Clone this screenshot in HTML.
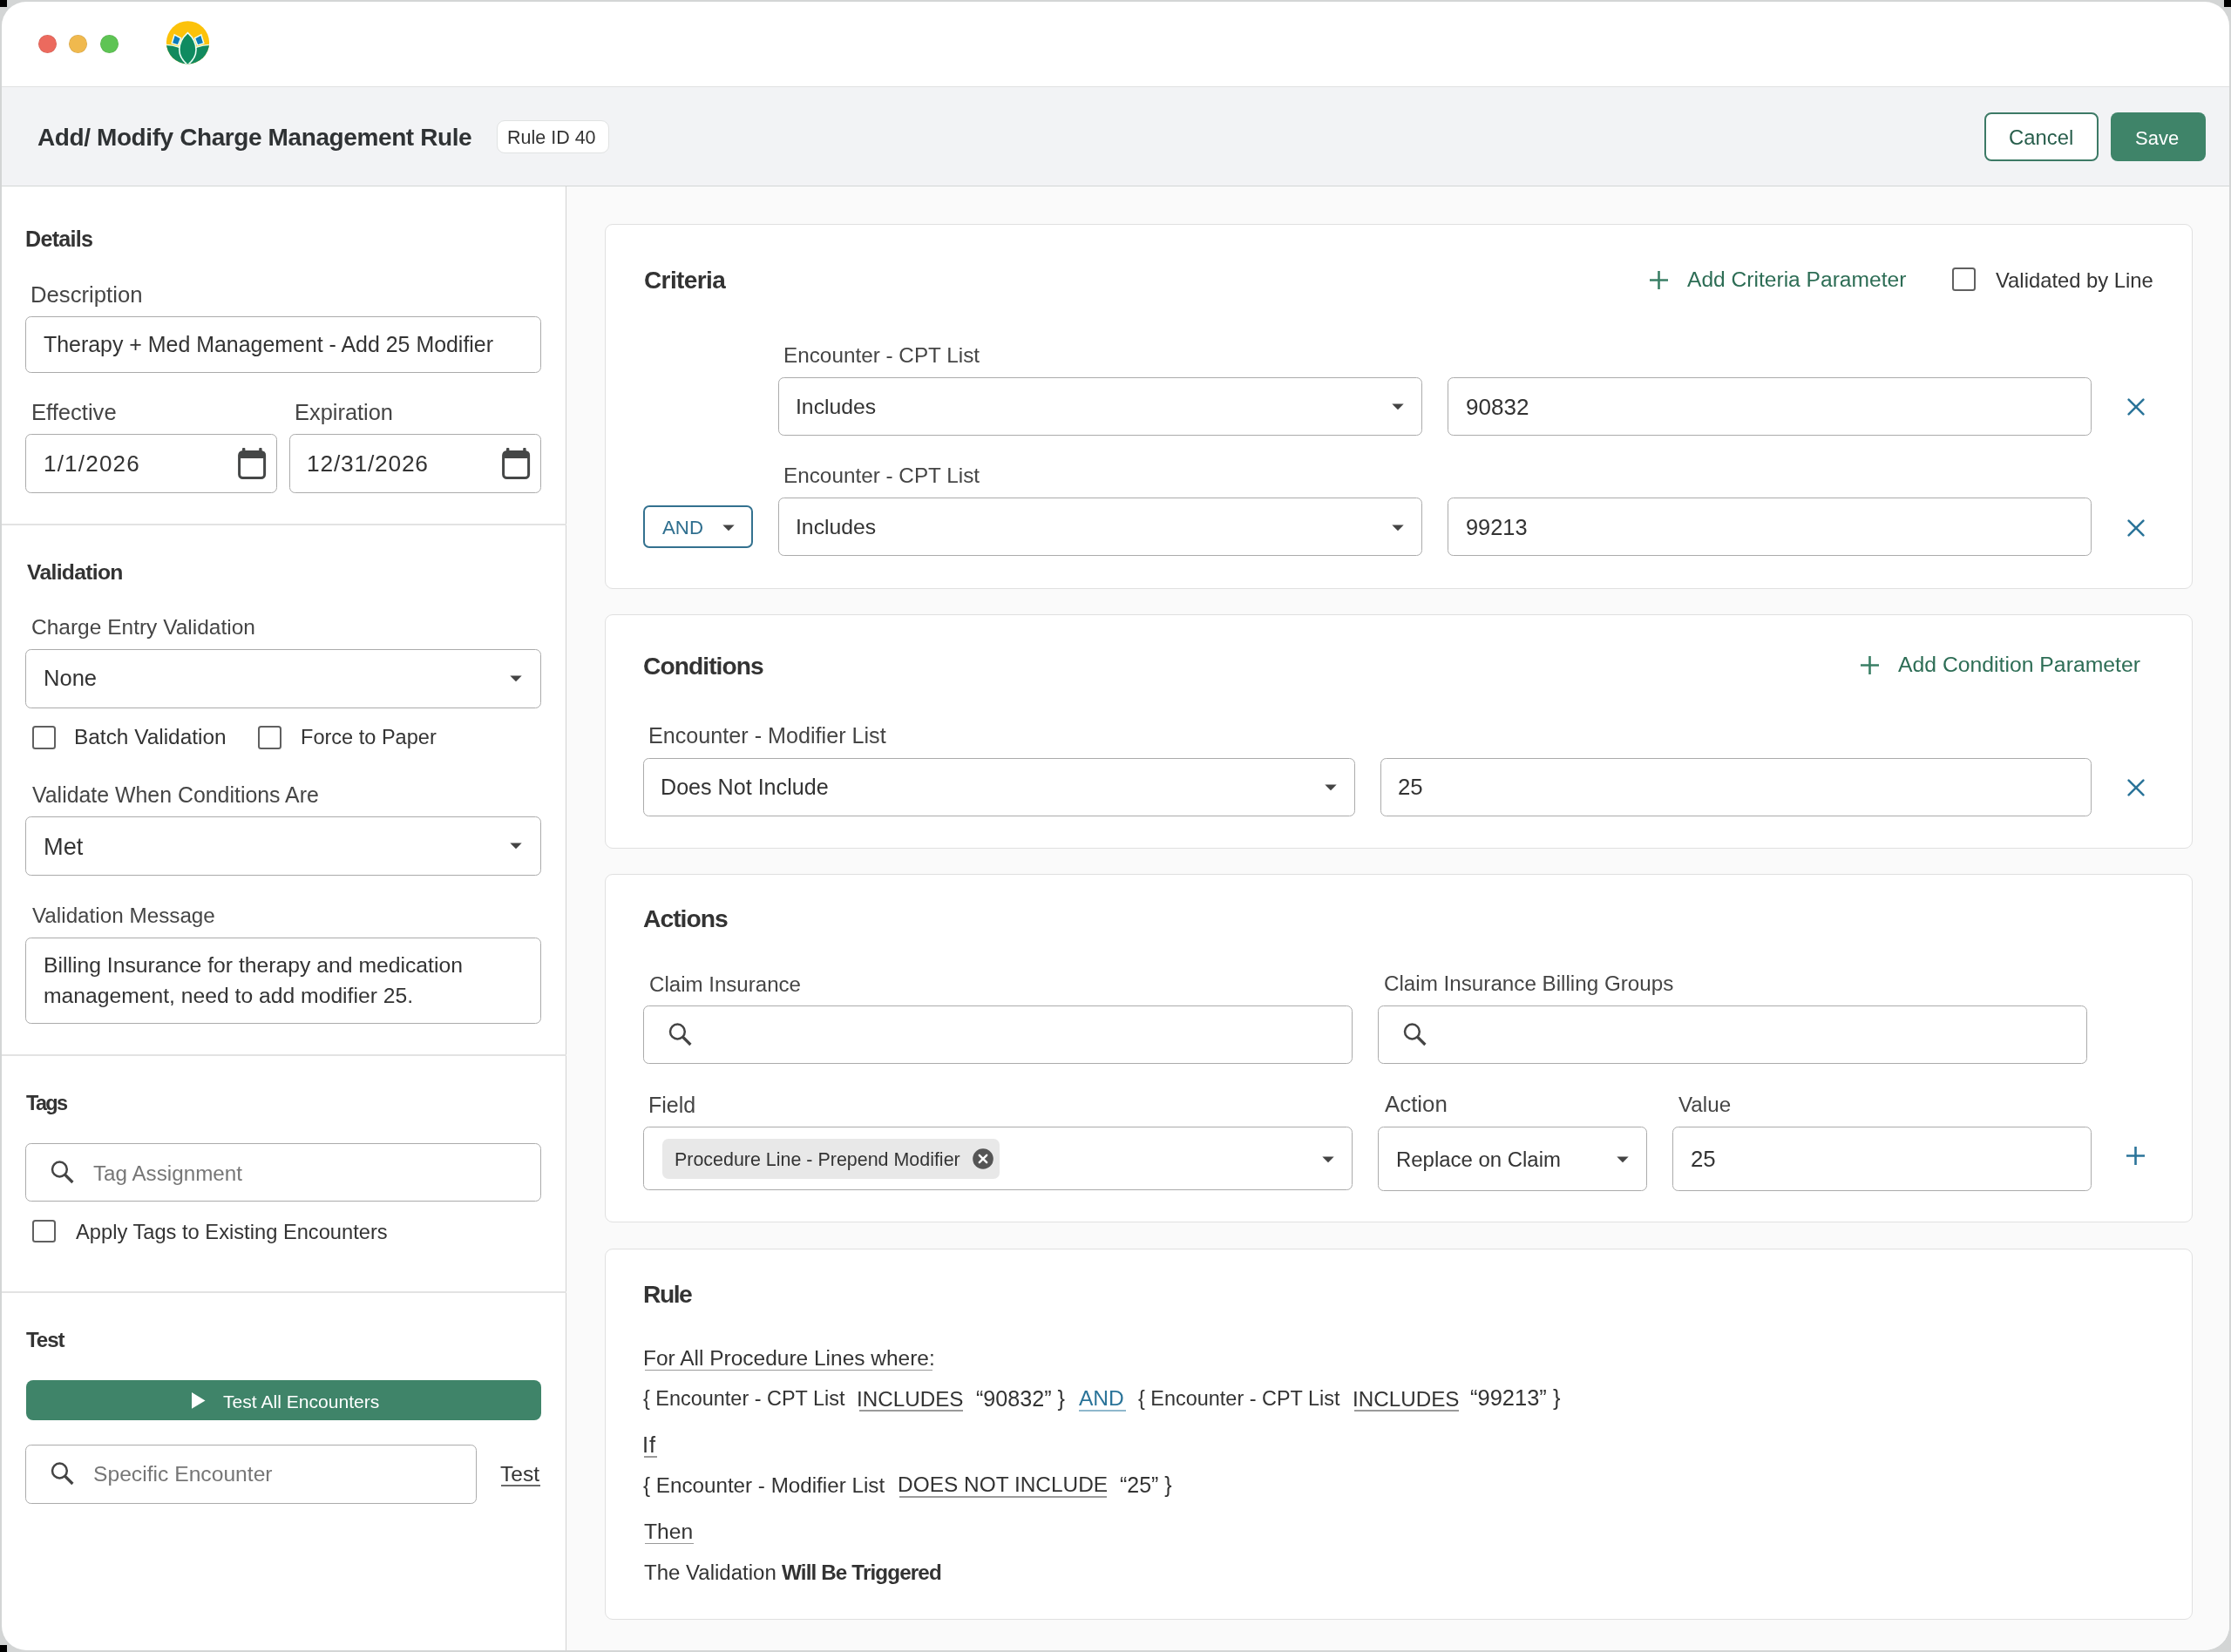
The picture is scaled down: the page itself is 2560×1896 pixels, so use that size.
<!DOCTYPE html><html><head><meta charset="utf-8"><style>
html,body{margin:0;padding:0;}
body{width:2560px;height:1896px;background:#D3D5D5;position:relative;overflow:hidden;font-family:"Liberation Sans",sans-serif;color:#333;}
.t{position:absolute;white-space:pre;line-height:1;will-change:transform;}
.b{position:absolute;box-sizing:border-box;}
#win{position:absolute;left:2px;top:2px;width:2556px;height:1892px;border-radius:28px;background:#fff;overflow:hidden;}
#win .t, #win .b, #win svg{}
u{text-decoration:none;}
</style></head><body>
<div class="b" style="left:0;top:0;width:8px;height:8px;background:#000"></div>
<div class="b" style="left:2552px;top:0;width:8px;height:8px;background:#000"></div>
<div class="b" style="left:0;top:1888px;width:8px;height:8px;background:#000"></div>
<div id="win">
<div style="position:absolute;left:-2px;top:-2px;width:2560px;height:1896px;">
<div class="b" style="left:0.0px;top:98.5px;width:2560.0px;height:115.3px;background:#F2F3F5;border-top:1.5px solid #E0E2E2;border-bottom:1.5px solid #D3D6D6;"></div>
<div class="b" style="left:649.3px;top:213.8px;width:1910.7px;height:1682.2px;background:#FAFAFA;border-left:1.5px solid #D2D2D2;"></div>
<div class="b" style="left:43.7px;top:39.9px;width:21.2px;height:21.0px;border-radius:50%;background:#EC6A5E;box-shadow:inset 0 0 0 0.6px rgba(0,0,0,0.12);"></div>
<div class="b" style="left:79.2px;top:39.9px;width:21.2px;height:21.0px;border-radius:50%;background:#F0B94E;box-shadow:inset 0 0 0 0.6px rgba(0,0,0,0.12);"></div>
<div class="b" style="left:114.7px;top:39.9px;width:21.2px;height:21.0px;border-radius:50%;background:#5EC454;box-shadow:inset 0 0 0 0.6px rgba(0,0,0,0.12);"></div>
<svg style="position:absolute;left:185.0px;top:18.0px" width="60" height="60" viewBox="0 0 60 60"><defs><clipPath id="lc"><circle cx="30.5" cy="30.8" r="24.6"/></clipPath></defs>
<g clip-path="url(#lc)">
<rect x="0" y="0" width="60" height="60" fill="#FCC20A"/>
<path d="M1 33.4 Q12 33 20 36.2 L30.4 38 L30.4 60 L1 60 Z" fill="#128A5E" stroke="#ECFFF6" stroke-width="1.4"/>
<path d="M60 33.4 Q49 33 40.8 36.2 L30.4 38 L30.4 60 L60 60 Z" fill="#128A5E" stroke="#ECFFF6" stroke-width="1.4"/>
<path d="M15.2 21.8 L22.6 25.8 L19.4 33.9 L12.2 31.6 Z" fill="#0E7CB9" stroke="#ECFFF6" stroke-width="1.5"/>
<path d="M45.8 21.8 L38.4 25.8 L41.6 33.9 L48.8 31.6 Z" fill="#0E7CB9" stroke="#ECFFF6" stroke-width="1.5"/>
<path d="M30.4 19.6 C36.5 25 40 32 40 39 C40 46 36 52 30.4 56.5 C24.8 52 20.8 46 20.8 39 C20.8 32 24.3 25 30.4 19.6 Z" fill="#0F8B60" stroke="#ECFFF6" stroke-width="1.6"/>
</g></svg>
<div class="t" style="left:43.30px;top:144.3px;font-size:28.0px;font-weight:700;color:#2F3234;letter-spacing:-0.4px;">Add/ Modify Charge Management Rule</div>
<div class="b" style="left:569.8px;top:138.3px;width:129.0px;height:38.2px;background:#fff;border:1.5px solid #E0E2E2;border-radius:9px;"></div>
<div class="t" style="left:582.24px;top:148.1px;font-size:21.51px;">Rule ID 40</div>
<div class="b" style="left:2277.0px;top:129.0px;width:131.0px;height:56.0px;background:#fff;border:2px solid #3D7A66;border-radius:8px;"></div>
<div class="t" style="left:2304.59px;top:145.9px;font-size:23.834px;color:#285E4C;">Cancel</div>
<div class="b" style="left:2422.0px;top:129.0px;width:109.0px;height:56.0px;background:#3F8469;border-radius:8px;"></div>
<div class="t" style="left:2450.40px;top:147.5px;font-size:22.0px;color:#fff;">Save</div>
<div class="t" style="left:29.32px;top:261.7px;font-size:25.171px;font-weight:700;color:#333333;letter-spacing:-0.75px;">Details</div>
<div class="t" style="left:35.49px;top:326.2px;font-size:25.698px;color:#454545;">Description</div>
<div class="b" style="left:29.2px;top:363.2px;width:591.5px;height:64.5px;border:1.5px solid #ABABAB;border-radius:6.5px;background:#fff;"></div>
<div class="t" style="left:50.44px;top:383.3px;font-size:24.939px;color:#333333;">Therapy + Med Management - Add 25 Modifier</div>
<div class="t" style="left:35.50px;top:461.1px;font-size:25.596px;color:#454545;">Effective</div>
<div class="t" style="left:338.12px;top:461.3px;font-size:25.413px;color:#454545;">Expiration</div>
<div class="b" style="left:29.2px;top:498.2px;width:288.5px;height:67.5px;border:1.5px solid #ABABAB;border-radius:6.5px;background:#fff;"></div>
<div class="b" style="left:332.2px;top:498.2px;width:288.5px;height:67.5px;border:1.5px solid #ABABAB;border-radius:6.5px;background:#fff;"></div>
<div class="t" style="left:49.82px;top:518.9px;font-size:26.059px;color:#333333;letter-spacing:1.2px;">1/1/2026</div>
<div class="t" style="left:352.39px;top:518.7px;font-size:26.332px;color:#333333;letter-spacing:0.8px;">12/31/2026</div>
<svg style="position:absolute;left:272.5px;top:512.5px" width="34" height="38" viewBox="0 0 34 38"><rect x="1.6" y="5.6" width="29" height="30" rx="4" fill="none" stroke="#454747" stroke-width="3"/><rect x="1" y="5" width="30.5" height="8" rx="3" fill="#454747"/><rect x="5" y="1" width="3.4" height="6" rx="1" fill="#454747"/><rect x="24.2" y="1" width="3.4" height="6" rx="1" fill="#454747"/></svg>
<svg style="position:absolute;left:575.5px;top:512.5px" width="34" height="38" viewBox="0 0 34 38"><rect x="1.6" y="5.6" width="29" height="30" rx="4" fill="none" stroke="#454747" stroke-width="3"/><rect x="1" y="5" width="30.5" height="8" rx="3" fill="#454747"/><rect x="5" y="1" width="3.4" height="6" rx="1" fill="#454747"/><rect x="24.2" y="1" width="3.4" height="6" rx="1" fill="#454747"/></svg>
<div class="b" style="left:2.0px;top:601.3px;width:648.0px;height:1.5px;background:#E3E3E3;"></div>
<div class="t" style="left:30.83px;top:644.8px;font-size:24.682px;font-weight:700;color:#333333;letter-spacing:-0.68px;">Validation</div>
<div class="t" style="left:36.36px;top:708.2px;font-size:24.512px;color:#454545;">Charge Entry Validation</div>
<div class="b" style="left:29.2px;top:745.2px;width:591.5px;height:67.5px;border:1.5px solid #ABABAB;border-radius:6.5px;background:#fff;"></div>
<div class="t" style="left:49.70px;top:766.4px;font-size:25.567px;color:#333333;">None</div>
<svg style="position:absolute;left:584.0px;top:774.0px" width="16" height="10" viewBox="0 0 16 10"><path d="M1.3 1.6 L14.7 1.6 L8 8.3 Z" fill="#444"/></svg>
<div class="b" style="left:37.2px;top:833.2px;width:26.6px;height:26.8px;border:2.7px solid #606060;border-radius:3.5px;background:#fff;"></div>
<div class="t" style="left:85.00px;top:834.3px;font-size:24.415px;color:#333333;">Batch Validation</div>
<div class="b" style="left:296.3px;top:833.2px;width:26.6px;height:26.8px;border:2.7px solid #606060;border-radius:3.5px;background:#fff;"></div>
<div class="t" style="left:344.77px;top:835.1px;font-size:23.561px;color:#333333;">Force to Paper</div>
<div class="t" style="left:37.49px;top:900.3px;font-size:24.907px;color:#454545;">Validate When Conditions Are</div>
<div class="b" style="left:29.2px;top:937.2px;width:591.5px;height:67.5px;border:1.5px solid #ABABAB;border-radius:6.5px;background:#fff;"></div>
<div class="t" style="left:49.57px;top:957.6px;font-size:27.222px;color:#333333;">Met</div>
<svg style="position:absolute;left:584.0px;top:966.0px" width="16" height="10" viewBox="0 0 16 10"><path d="M1.3 1.6 L14.7 1.6 L8 8.3 Z" fill="#444"/></svg>
<div class="t" style="left:37.49px;top:1039.1px;font-size:24.263px;color:#454545;">Validation Message</div>
<div class="b" style="left:29.2px;top:1076.0px;width:591.5px;height:99.2px;border:1.5px solid #ABABAB;border-radius:6.5px;background:#fff;"></div>
<div class="t" style="left:49.77px;top:1095.8px;font-size:24.738px;color:#333333;">Billing Insurance for therapy and medication</div>
<div class="t" style="left:50.16px;top:1130.7px;font-size:24.694px;color:#333333;">management, need to add modifier 25.</div>
<div class="b" style="left:2.0px;top:1210.3px;width:648.0px;height:1.5px;background:#E3E3E3;"></div>
<div class="t" style="left:30.24px;top:1254.8px;font-size:23.5px;font-weight:700;color:#333333;letter-spacing:-1.7px;">Tags</div>
<div class="b" style="left:29.2px;top:1312.2px;width:591.5px;height:67.3px;border:1.5px solid #ABABAB;border-radius:6.5px;background:#fff;"></div>
<svg style="position:absolute;left:58.0px;top:1332.0px" width="28" height="28" viewBox="0 0 28 28"><circle cx="10.4" cy="10" r="8.4" fill="none" stroke="#444" stroke-width="2.5"/><path d="M16.4 16 L25.4 25" stroke="#444" stroke-width="3.2"/></svg>
<div class="t" style="left:107.46px;top:1334.5px;font-size:24.229px;color:#767676;">Tag Assignment</div>
<div class="b" style="left:37.2px;top:1399.5px;width:26.6px;height:26.8px;border:2.7px solid #606060;border-radius:3.5px;background:#fff;"></div>
<div class="t" style="left:86.95px;top:1402.5px;font-size:23.693px;color:#333333;">Apply Tags to Existing Encounters</div>
<div class="b" style="left:2.0px;top:1482.3px;width:648.0px;height:1.5px;background:#E3E3E3;"></div>
<div class="t" style="left:30.23px;top:1526.2px;font-size:24.119px;font-weight:700;color:#333333;letter-spacing:-1.1px;">Test</div>
<div class="b" style="left:29.6px;top:1584.0px;width:591.1px;height:46.0px;background:#3F8469;border-radius:8px;"></div>
<svg style="position:absolute;left:219.0px;top:1597.0px" width="18" height="21" viewBox="0 0 18 21"><path d="M1 1 L16.5 10.4 L1 19.8 Z" fill="#fff"/></svg>
<div class="t" style="left:256.03px;top:1598.1px;font-size:21.1px;color:#fff;">Test All Encounters</div>
<div class="b" style="left:29.2px;top:1658.2px;width:517.5px;height:68.1px;border:1.5px solid #ABABAB;border-radius:6.5px;background:#fff;"></div>
<svg style="position:absolute;left:58.0px;top:1678.0px" width="28" height="28" viewBox="0 0 28 28"><circle cx="10.4" cy="10" r="8.4" fill="none" stroke="#444" stroke-width="2.5"/><path d="M16.4 16 L25.4 25" stroke="#444" stroke-width="3.2"/></svg>
<div class="t" style="left:106.88px;top:1679.5px;font-size:24.677px;color:#767676;">Specific Encounter</div>
<div class="t" style="left:574.45px;top:1680.3px;font-size:24.5px;color:#333333;">Test</div>
<div class="b" style="left:575.0px;top:1704.2px;width:45.0px;height:1.6px;background:#6a6a6a;"></div>
<div class="b" style="left:694.0px;top:256.6px;width:1822.0px;height:419.3px;background:#fff;border:1.5px solid #E0E0E0;border-radius:9px;"></div>
<div class="t" style="left:738.85px;top:307.9px;font-size:28.0px;font-weight:700;color:#333333;letter-spacing:-0.62px;">Criteria</div>
<svg style="position:absolute;left:1890.8px;top:308.7px" width="25" height="25" viewBox="0 0 25 25"><path d="M12.5 2 V23 M2 12.5 H23" stroke="#3A7F65" stroke-width="2.6"/></svg>
<div class="t" style="left:1935.55px;top:309.2px;font-size:24.598px;color:#2D6D55;">Add Criteria Parameter</div>
<div class="b" style="left:2240.0px;top:307.1px;width:26.6px;height:26.8px;border:2.7px solid #606060;border-radius:3.5px;background:#fff;"></div>
<div class="t" style="left:2289.60px;top:309.8px;font-size:23.819px;color:#333333;">Validated by Line</div>
<div class="t" style="left:899.01px;top:395.8px;font-size:24.306px;color:#454545;">Encounter - CPT List</div>
<div class="b" style="left:892.5px;top:432.9px;width:739.9px;height:67.1px;border:1.5px solid #ABABAB;border-radius:6.5px;background:#fff;"></div>
<div class="t" style="left:912.52px;top:454.5px;font-size:24.743px;color:#333333;">Includes</div>
<svg style="position:absolute;left:1596.3px;top:462.2px" width="16" height="10" viewBox="0 0 16 10"><path d="M1.3 1.6 L14.7 1.6 L8 8.3 Z" fill="#444"/></svg>
<div class="b" style="left:1661.2px;top:432.9px;width:739.0px;height:67.1px;border:1.5px solid #ABABAB;border-radius:6.5px;background:#fff;"></div>
<div class="t" style="left:1681.78px;top:453.5px;font-size:26.075px;color:#333333;">90832</div>
<svg style="position:absolute;left:2439.0px;top:455.0px" width="24" height="24" viewBox="0 0 24 24"><path d="M3.6 3.6 L20.4 20.4 M20.4 3.6 L3.6 20.4" stroke="#2B7499" stroke-width="2.6" stroke-linecap="round"/></svg>
<div class="t" style="left:899.01px;top:534.1px;font-size:24.306px;color:#454545;">Encounter - CPT List</div>
<div class="b" style="left:892.5px;top:571.2px;width:739.9px;height:67.3px;border:1.5px solid #ABABAB;border-radius:6.5px;background:#fff;"></div>
<div class="t" style="left:912.52px;top:592.9px;font-size:24.743px;color:#333333;">Includes</div>
<svg style="position:absolute;left:1596.3px;top:600.7px" width="16" height="10" viewBox="0 0 16 10"><path d="M1.3 1.6 L14.7 1.6 L8 8.3 Z" fill="#444"/></svg>
<div class="b" style="left:1661.2px;top:571.2px;width:739.0px;height:67.3px;border:1.5px solid #ABABAB;border-radius:6.5px;background:#fff;"></div>
<div class="t" style="left:1681.81px;top:592.5px;font-size:25.4px;color:#333333;">99213</div>
<svg style="position:absolute;left:2439.0px;top:593.5px" width="24" height="24" viewBox="0 0 24 24"><path d="M3.6 3.6 L20.4 20.4 M20.4 3.6 L3.6 20.4" stroke="#2B7499" stroke-width="2.6" stroke-linecap="round"/></svg>
<div class="b" style="left:738.0px;top:580.2px;width:126.0px;height:49.3px;background:#fff;border:2px solid #33718F;border-radius:7px;"></div>
<div class="t" style="left:759.96px;top:594.8px;font-size:22.284px;color:#2F6F8F;">AND</div>
<svg style="position:absolute;left:827.5px;top:601.0px" width="16" height="10" viewBox="0 0 16 10"><path d="M1.3 1.6 L14.7 1.6 L8 8.3 Z" fill="#444"/></svg>
<div class="b" style="left:694.0px;top:704.6px;width:1822.0px;height:269.0px;background:#fff;border:1.5px solid #E0E0E0;border-radius:9px;"></div>
<div class="t" style="left:737.84px;top:749.6px;font-size:28.206px;font-weight:700;color:#333333;letter-spacing:-0.94px;">Conditions</div>
<svg style="position:absolute;left:2133.0px;top:751.3px" width="25" height="25" viewBox="0 0 25 25"><path d="M12.5 2 V23 M2 12.5 H23" stroke="#3A7F65" stroke-width="2.6"/></svg>
<div class="t" style="left:2177.65px;top:750.9px;font-size:24.762px;color:#2D6D55;">Add Condition Parameter</div>
<div class="t" style="left:743.94px;top:832.3px;font-size:25.17px;color:#454545;">Encounter - Modifier List</div>
<div class="b" style="left:738.2px;top:869.8px;width:816.9px;height:66.8px;border:1.5px solid #ABABAB;border-radius:6.5px;background:#fff;"></div>
<div class="t" style="left:757.94px;top:891.3px;font-size:25.112px;color:#333333;">Does Not Include</div>
<svg style="position:absolute;left:1519.0px;top:899.0px" width="16" height="10" viewBox="0 0 16 10"><path d="M1.3 1.6 L14.7 1.6 L8 8.3 Z" fill="#444"/></svg>
<div class="b" style="left:1584.0px;top:869.8px;width:816.3px;height:67.4px;border:1.5px solid #ABABAB;border-radius:6.5px;background:#fff;"></div>
<div class="t" style="left:1604.40px;top:891.1px;font-size:25.847px;color:#333333;">25</div>
<svg style="position:absolute;left:2438.6px;top:892.0px" width="24" height="24" viewBox="0 0 24 24"><path d="M3.6 3.6 L20.4 20.4 M20.4 3.6 L3.6 20.4" stroke="#2B7499" stroke-width="2.6" stroke-linecap="round"/></svg>
<div class="b" style="left:694.0px;top:1003.3px;width:1822.0px;height:400.0px;background:#fff;border:1.5px solid #E0E0E0;border-radius:9px;"></div>
<div class="t" style="left:738.29px;top:1040.3px;font-size:28.328px;font-weight:700;color:#333333;letter-spacing:-1.0px;">Actions</div>
<div class="t" style="left:744.78px;top:1117.6px;font-size:24.08px;color:#454545;">Claim Insurance</div>
<div class="b" style="left:738.2px;top:1154.2px;width:814.0px;height:66.7px;border:1.5px solid #ABABAB;border-radius:6.5px;background:#fff;"></div>
<svg style="position:absolute;left:767.0px;top:1174.0px" width="28" height="28" viewBox="0 0 28 28"><circle cx="10.4" cy="10" r="8.4" fill="none" stroke="#444" stroke-width="2.5"/><path d="M16.4 16 L25.4 25" stroke="#444" stroke-width="3.2"/></svg>
<div class="t" style="left:1587.77px;top:1117.3px;font-size:24.21px;color:#454545;">Claim Insurance Billing Groups</div>
<div class="b" style="left:1580.8px;top:1154.0px;width:814.6px;height:67.4px;border:1.5px solid #ABABAB;border-radius:6.5px;background:#fff;"></div>
<svg style="position:absolute;left:1609.5px;top:1174.0px" width="28" height="28" viewBox="0 0 28 28"><circle cx="10.4" cy="10" r="8.4" fill="none" stroke="#444" stroke-width="2.5"/><path d="M16.4 16 L25.4 25" stroke="#444" stroke-width="3.2"/></svg>
<div class="t" style="left:743.95px;top:1255.8px;font-size:25.01px;color:#454545;">Field</div>
<div class="b" style="left:738.2px;top:1293.2px;width:813.5px;height:73.1px;border:1.5px solid #ABABAB;border-radius:6.5px;background:#fff;"></div>
<div class="b" style="left:760.0px;top:1307.4px;width:386.5px;height:45.6px;background:#E8E8E8;border-radius:7px;"></div>
<div class="t" style="left:774.24px;top:1320.8px;font-size:21.445px;color:#333333;">Procedure Line - Prepend Modifier</div>
<svg style="position:absolute;left:1115.5px;top:1318.0px" width="24" height="24" viewBox="0 0 24 24"><circle cx="12" cy="12" r="11.8" fill="#555"/><path d="M7.8 7.8 L16.2 16.2 M16.2 7.8 L7.8 16.2" stroke="#fff" stroke-width="2.4" stroke-linecap="round"/></svg>
<svg style="position:absolute;left:1516.0px;top:1325.5px" width="16" height="10" viewBox="0 0 16 10"><path d="M1.3 1.6 L14.7 1.6 L8 8.3 Z" fill="#444"/></svg>
<div class="t" style="left:1588.95px;top:1254.8px;font-size:25.851px;color:#454545;">Action</div>
<div class="b" style="left:1580.8px;top:1293.0px;width:309.4px;height:74.1px;border:1.5px solid #ABABAB;border-radius:6.5px;background:#fff;"></div>
<div class="t" style="left:1601.53px;top:1319.2px;font-size:23.956px;color:#333333;">Replace on Claim</div>
<svg style="position:absolute;left:1853.7px;top:1325.5px" width="16" height="10" viewBox="0 0 16 10"><path d="M1.3 1.6 L14.7 1.6 L8 8.3 Z" fill="#444"/></svg>
<div class="t" style="left:1925.89px;top:1256.2px;font-size:24.21px;color:#454545;">Value</div>
<div class="b" style="left:1918.8px;top:1293.2px;width:481.5px;height:73.5px;border:1.5px solid #ABABAB;border-radius:6.5px;background:#fff;"></div>
<div class="t" style="left:1939.70px;top:1317.6px;font-size:25.847px;color:#333333;">25</div>
<svg style="position:absolute;left:2438.1px;top:1314.0px" width="25" height="25" viewBox="0 0 25 25"><path d="M12.5 2 V23 M2 12.5 H23" stroke="#2B7499" stroke-width="2.6"/></svg>
<div class="b" style="left:694.0px;top:1433.3px;width:1822.0px;height:425.7px;background:#fff;border:1.5px solid #E0E0E0;border-radius:9px;"></div>
<div class="t" style="left:737.81px;top:1471.3px;font-size:28.242px;font-weight:700;color:#333333;letter-spacing:-1.5px;">Rule</div>
<div class="t" style="left:737.69px;top:1547.1px;font-size:24.491px;color:#333333;">For All Procedure Lines where:</div>
<div class="b" style="left:739.7px;top:1571.8px;width:330.2px;height:1.6px;background:#9a9a9a;"></div>
<div class="t" style="left:738.31px;top:1594.2px;font-size:23.441px;color:#333333;">{ Encounter - CPT List</div>
<div class="t" style="left:983.36px;top:1593.5px;font-size:24.22px;color:#333333;">INCLUDES</div>
<div class="b" style="left:985.6px;top:1618.0px;width:119.1px;height:1.6px;background:#9a9a9a;"></div>
<div class="t" style="left:1119.58px;top:1592.7px;font-size:25.149px;color:#333333;">“90832” }</div>
<div class="t" style="left:1237.55px;top:1593.2px;font-size:24.533px;color:#2B7499;">AND</div>
<div class="b" style="left:1237.6px;top:1618.0px;width:54.0px;height:1.6px;background:#8fb8cc;"></div>
<div class="t" style="left:1306.11px;top:1594.2px;font-size:23.441px;color:#333333;">{ Encounter - CPT List</div>
<div class="t" style="left:1551.66px;top:1593.5px;font-size:24.22px;color:#333333;">INCLUDES</div>
<div class="b" style="left:1553.9px;top:1618.0px;width:120.1px;height:1.6px;background:#9a9a9a;"></div>
<div class="t" style="left:1687.07px;top:1592.4px;font-size:25.499px;color:#333333;">“99213” }</div>
<div class="t" style="left:737.35px;top:1645.6px;font-size:25.5px;color:#333333;letter-spacing:0.8px;">If</div>
<div class="b" style="left:738.5px;top:1671.4px;width:15.7px;height:1.6px;background:#9a9a9a;"></div>
<div class="t" style="left:738.30px;top:1692.5px;font-size:24.215px;color:#333333;">{ Encounter - Modifier List</div>
<div class="t" style="left:1029.60px;top:1692.3px;font-size:24.438px;color:#333333;">DOES NOT INCLUDE</div>
<div class="b" style="left:1031.6px;top:1717.0px;width:238.1px;height:1.6px;background:#9a9a9a;"></div>
<div class="t" style="left:1284.89px;top:1691.9px;font-size:24.975px;color:#333333;">“25” }</div>
<div class="t" style="left:739.15px;top:1746.0px;font-size:24.635px;color:#333333;">Then</div>
<div class="b" style="left:739.7px;top:1770.9px;width:56.5px;height:1.6px;background:#9a9a9a;"></div>
<div class="t" style="left:739.16px;top:1792.7px;font-size:24.02px;color:#333333;">The Validation</div>
<div class="t" style="left:896.78px;top:1792.5px;font-size:24.227px;font-weight:700;color:#333333;letter-spacing:-0.87px;">Will Be Triggered</div>
</div></div></body></html>
